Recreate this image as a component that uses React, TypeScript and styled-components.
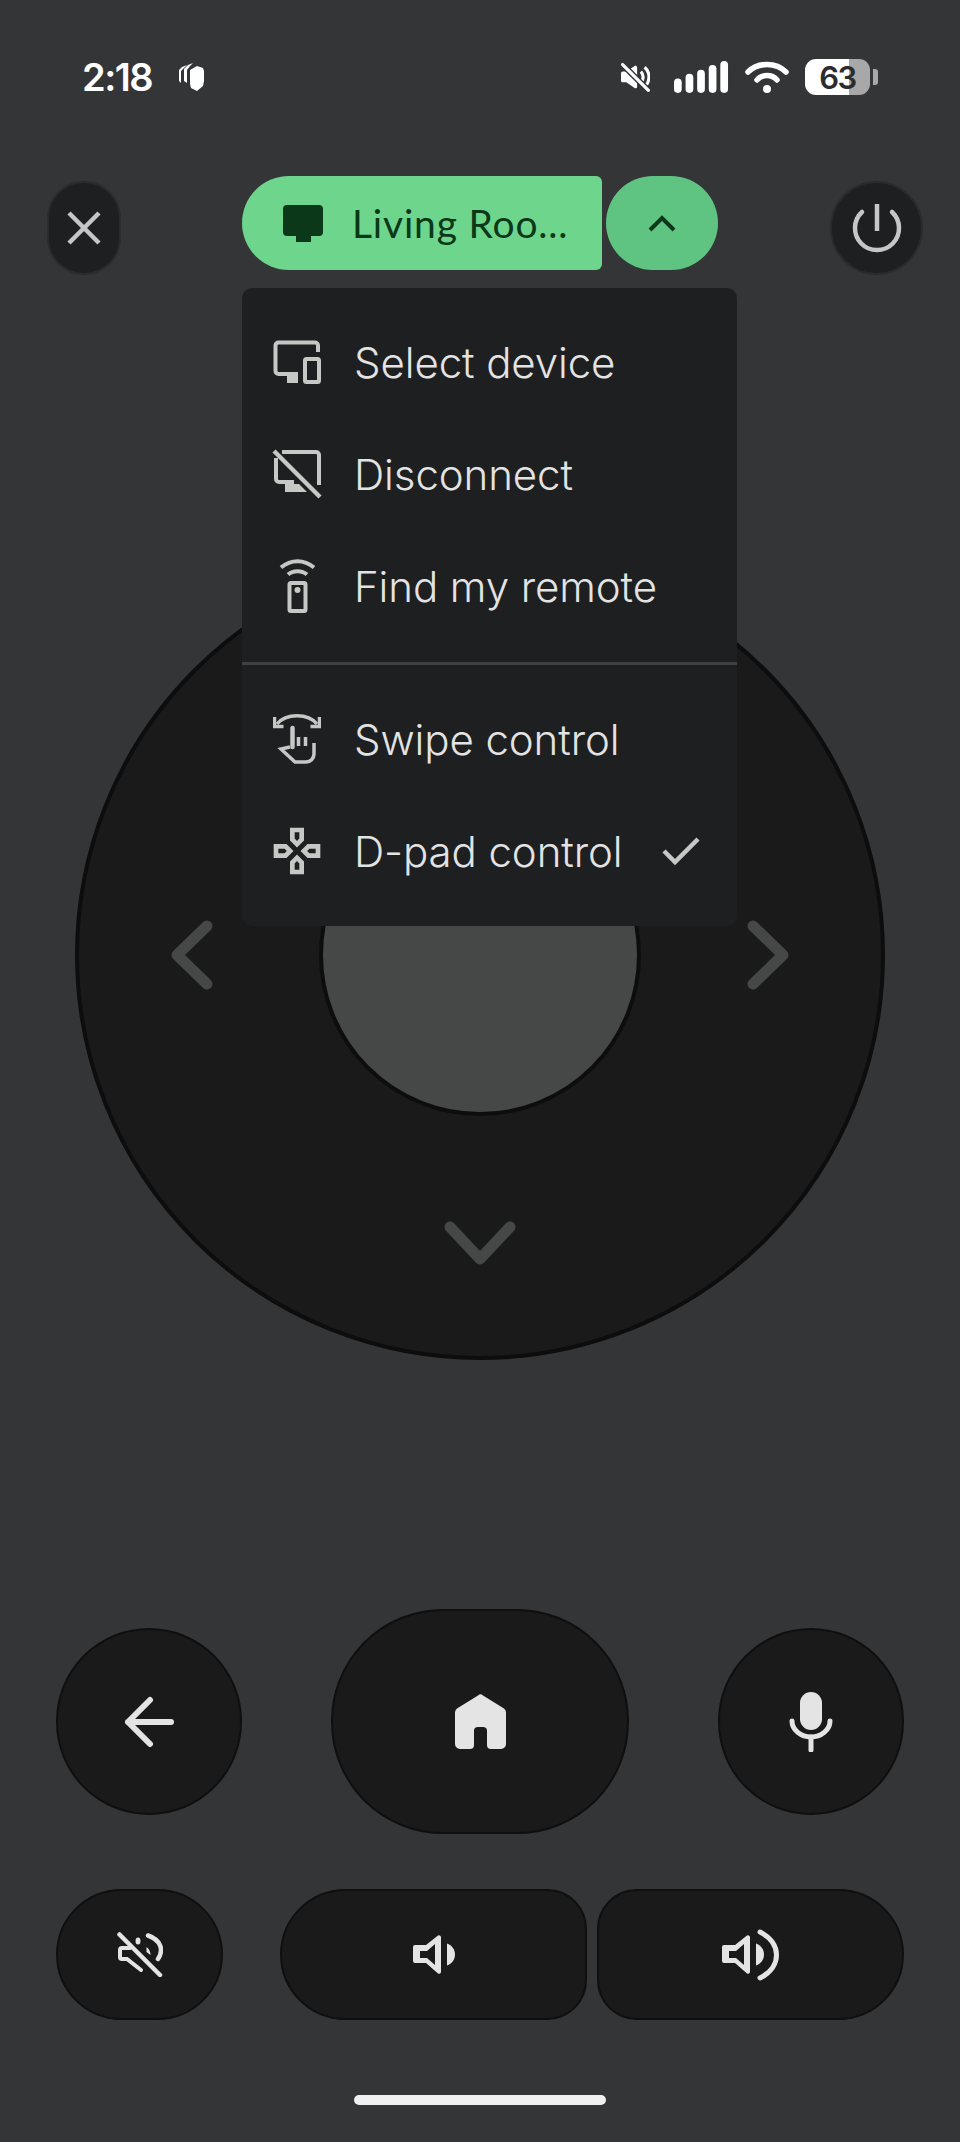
import styled, { createGlobalStyle } from "styled-components";

const GlobalStyle = createGlobalStyle`
  html, body {
    margin: 0;
    padding: 0;
    background: #343537;
  }
  * {
    box-sizing: border-box;
  }
  svg {
    display: block;
    flex: none;
  }
`;

const Screen = styled.main`
  width: 960px;
  height: 2142px;
  background: #343537;
  overflow: hidden;
  font-family: Inter, "Liberation Sans", sans-serif;
`;

const StatusBar = styled.header`
  height: 36px;
  margin-top: 59px;
  padding: 0 82px;
  display: flex;
  align-items: center;
  justify-content: space-between;
`;

const StatusLeft = styled.div`
  display: flex;
  align-items: center;
  gap: 25px;
`;

const Time = styled.span`
  width: 71px;
  font-family: Inter, sans-serif;
  font-size: 38px;
  font-weight: 600;
  letter-spacing: -1.5px;
  color: #fff;
`;

const StatusRight = styled.div`
  display: flex;
  align-items: center;
`;

const BatteryBody = styled.div`
  width: 65px;
  height: 36px;
  margin-left: 16px;
  border-radius: 11px;
  background: linear-gradient(90deg, #fff 68%, #a8a8a8 68%);
  color: #2b2c2e;
  font-family: Inter, sans-serif;
  font-size: 31px;
  font-weight: 600;
  letter-spacing: -1.5px;
  display: flex;
  align-items: center;
  justify-content: center;
`;

const BatteryNub = styled.div`
  width: 5px;
  height: 16px;
  margin-left: 3px;
  border-radius: 0 3px 3px 0;
  background: #a8a8a8;
`;

const TopRow = styled.nav`
  height: 94px;
  margin-top: 81px;
  padding: 0 37px 0 47px;
  display: flex;
  align-items: center;
`;

const RoundButton = styled.div<{ $w: number; $h: number }>`
  width: ${(p) => p.$w}px;
  height: ${(p) => p.$h}px;
  margin-top: 10px;
  border-radius: 47px;
  background: #1e1f21;
  border: 2px solid #2a2b2d;
  display: flex;
  align-items: center;
  justify-content: center;
`;

const PowerButton = styled(RoundButton)`
  margin-left: auto;
`;

const DeviceGroup = styled.div`
  position: relative;
  margin-left: 121px;
  display: flex;
  gap: 4px;
`;

const DevicePill = styled.div`
  width: 360px;
  height: 94px;
  padding-left: 41px;
  border-radius: 47px 6px 6px 47px;
  background: #6dd58c;
  color: #0a3818;
  display: flex;
  align-items: center;
  gap: 29px;
`;

const DeviceName = styled.span`
  font-family: Lato, sans-serif;
  font-size: 39px;
  letter-spacing: 0.8px;
`;

const ChevronPill = styled.div`
  width: 112px;
  height: 94px;
  border-radius: 47px;
  background: #5fc482;
  display: flex;
  align-items: center;
  justify-content: center;
`;

const Menu = styled.div`
  position: absolute;
  top: 112px;
  left: 0;
  z-index: 5;
  width: 495px;
  height: 638px;
  padding: 19px 0;
  border-radius: 10px;
  background: #1e1f21;
`;

const MenuItem = styled.div`
  height: 112px;
  padding-left: 29px;
  padding-bottom: 2px;
  display: flex;
  align-items: center;
  color: #e3e3e3;
  font-size: 42px;
  font-weight: 300;
  letter-spacing: -0.1px;
`;

const MenuIcon = styled.div`
  width: 52px;
  margin-right: 31px;
  display: flex;
  justify-content: center;
`;

const MenuCheck = styled.div`
  margin-left: auto;
  margin-right: 37px;
`;

const Divider = styled.div`
  height: 3px;
  margin: 19px 0;
  background: #3f4042;
`;

const DpadWrap = styled.section`
  margin-top: 280px;
  display: flex;
  justify-content: center;
`;

const Dpad = styled.div`
  width: 810px;
  height: 810px;
  border-radius: 50%;
  background: #1a1a1a;
  border: 4px solid #0d0d0d;
  display: grid;
  grid-template-columns: 1fr 322px 1fr;
  grid-template-rows: 1fr 322px 1fr;
  place-items: center;
`;

const DpadCenter = styled.div`
  grid-column: 2;
  grid-row: 2;
  width: 100%;
  height: 100%;
  border-radius: 50%;
  background: #464847;
  border: 4px solid #0d0d0d;
`;

const DpadArrow = styled.div<{ $col: number; $row: number; $shift?: string }>`
  grid-column: ${(p) => p.$col};
  grid-row: ${(p) => p.$row};
  transform: ${(p) => p.$shift ?? "none"};
`;

const ControlRow = styled.section`
  margin-top: 249px;
  padding: 0 56px;
  display: flex;
  align-items: center;
  justify-content: space-between;
`;

const Key = styled.div<{ $w: number; $h: number; $radius?: string }>`
  width: ${(p) => p.$w}px;
  height: ${(p) => p.$h}px;
  border-radius: ${(p) => p.$radius ?? "112px"};
  background: #1a1a1a;
  border: 2px solid #0f0f0f;
  display: flex;
  align-items: center;
  justify-content: center;
`;

const VolumeRow = styled.section`
  margin-top: 55px;
  padding: 0 56px;
  display: flex;
  align-items: center;
`;

const VolumeKeys = styled.div`
  margin-left: 57px;
  display: flex;
  gap: 10px;
`;

const HomeBar = styled.div`
  width: 252px;
  height: 10px;
  margin: 75px auto 0;
  border-radius: 5px;
  background: #f0f0f0;
`;

const MENU_ICON = "#c6c8c5";
const KEY_ICON = "#e4e4e4";
const ARROW = "#464847";

function SelectDeviceIcon() {
  return (
    <svg width="48" height="44" viewBox="0 0 48 44" fill="none" stroke={MENU_ICON} strokeWidth="4">
      <path d="M45 12V5.5a3 3 0 0 0-3-3H5.5a3 3 0 0 0-3 3V31a3 3 0 0 0 3 3H25" />
      <path d="M14 33h11v10H14z" fill={MENU_ICON} stroke="none" />
      <rect x="32" y="19" width="14" height="23" rx="1.5" />
    </svg>
  );
}

function DisconnectIcon() {
  return (
    <svg width="50" height="50" viewBox="0 0 50 50" fill="none" stroke={MENU_ICON} strokeWidth="4">
      <path d="M10 3h34a3 3 0 0 1 3 3v30" />
      <path d="M4 9v21a3 3 0 0 0 3 3h15" />
      <path d="M13 35h14l8 8H13z" fill={MENU_ICON} stroke="none" />
      <path d="M2 2l46 46" strokeWidth="4.5" />
    </svg>
  );
}

function RemoteIcon() {
  return (
    <svg width="37" height="54" viewBox="0 0 37 54" fill="none" stroke={MENU_ICON} strokeWidth="4">
      <path d="M2 8.5C12 0 25 0 35 8.5" />
      <path d="M9 15.5C14 11 23 11 28 15.5" />
      <rect x="10.5" y="24" width="16" height="28" rx="1.5" />
      <circle cx="18.5" cy="31" r="3" fill={MENU_ICON} stroke="none" />
    </svg>
  );
}

function SwipeIcon() {
  return (
    <svg width="48" height="50" viewBox="0 0 48 50" fill="none" stroke={MENU_ICON} strokeWidth="3.5">
      <path d="M1.5 3v9.5h9M46.5 3v9.5h-9" />
      <path d="M4 10C13 -1 35 -1 44 10" />
      <path d="M19.5 33V14" strokeWidth="4.5" strokeLinecap="round" />
      <path d="M25.5 23v9M32.5 23v9" />
      <path d="M41 29v11a8 8 0 0 1-8 8H22L8 35l9-2" />
    </svg>
  );
}

function GamepadIcon() {
  return (
    <svg width="56" height="56" viewBox="0 0 24 24" fill={MENU_ICON}>
      <path d="M13 4v2.67l-1 1-1-1V4h2m7 7v2h-2.67l-1-1 1-1H20M6.67 11l1 1-1 1H4v-2h2.67M12 16.33l1 1V20h-2v-2.67l1-1M15 2H9v5.5l3 3 3-3V2zm7 7h-5.5l-3 3 3 3H22V9zM7.5 9H2v6h5.5l3-3-3-3zm4.5 4.5l-3 3V22h6v-5.5l-3-3z" />
    </svg>
  );
}

const SPEAKER =
  "M2 11h11L25 1.5a2 2 0 0 1 3 1.5v35a2 2 0 0 1-3 1.5L13 29H2a2 2 0 0 1-2-2V13a2 2 0 0 1 2-2zM7 17v7h7l8 7V10l-8 7z";

function VolumeDownIcon() {
  return (
    <svg width="42" height="41" viewBox="0 0 42 41" fill={KEY_ICON}>
      <path d={SPEAKER} fillRule="evenodd" />
      <path d="M34 9.5c5 2 8 6 8 11s-3 9-8 11z" />
    </svg>
  );
}

function VolumeUpIcon() {
  return (
    <svg width="58" height="52" viewBox="0 0 58 52" fill={KEY_ICON}>
      <g transform="translate(0 5)">
        <path d={SPEAKER} fillRule="evenodd" />
        <path d="M34 9.5c5 2 8 6 8 11s-3 9-8 11z" />
      </g>
      <path d="M38 3C60 14 60 38 38 49" fill="none" stroke={KEY_ICON} strokeWidth="5" strokeLinecap="round" />
    </svg>
  );
}

function MuteIcon() {
  return (
    <svg width="46" height="45" viewBox="0 0 46 45" fill="none" stroke={KEY_ICON} strokeWidth="4" strokeLinecap="round">
      <path d="M13 16H5a2 2 0 0 0-2 2v7a2 2 0 0 0 2 2h5l14 11" />
      <ellipse cx="21" cy="9" rx="2.5" ry="3.5" fill={KEY_ICON} stroke="none" />
      <path d="M29.5 15c3 2 4 5 4 8l-4-3z" fill={KEY_ICON} stroke="none" />
      <path d="M31 3.5C44 8 47 18 41 27" strokeWidth="4.5" />
      <path d="M2.5 2.5L43 43" strokeWidth="4.5" />
    </svg>
  );
}

function Chevron({ d, w, h }: { d: string; w: number; h: number }) {
  return (
    <svg width={w} height={h} viewBox={`0 0 ${w} ${h}`} fill="none" stroke={ARROW} strokeWidth="11" strokeLinecap="round" strokeLinejoin="round">
      <path d={d} />
    </svg>
  );
}

const menuTop = [
  { label: "Select device", icon: <SelectDeviceIcon /> },
  { label: "Disconnect", icon: <DisconnectIcon /> },
  { label: "Find my remote", icon: <RemoteIcon /> },
];

export default function App() {
  return (
    <Screen>
      <GlobalStyle />
      <StatusBar>
        <StatusLeft>
          <Time>2:18</Time>
          <svg width="27" height="30" viewBox="0 0 27 30" fill="#fff">
            <path d="M9 3L4 5 1 8v11l2 2V9l3-3z" />
            <path d="M15 1L10 3 6 7v12l3 2V8l3-4z" />
            <path d="M19 4l6 2 1 3v10l-1 5-6 5-6-3-1-4V8z" />
          </svg>
        </StatusLeft>
        <StatusRight>
          <svg width="29" height="29" viewBox="0 0 54 54" fill="none" stroke="#fff" strokeWidth="6">
            <path d="M3 19h8l16-11v36L11 33H3z" fill="#fff" strokeLinejoin="round" />
            <path d="M37 16a14 14 0 0 1 0 20M44 8a24 24 0 0 1 0 36" />
            <path d="M3 3l48 48" stroke="#343537" strokeWidth="11" />
            <path d="M3 3l48 48" strokeLinecap="round" />
          </svg>
          <svg width="55" height="33" viewBox="0 0 57 34" fill="#fff" style={{ marginLeft: 24 }}>
            <rect x="0" y="18" width="8" height="15" rx="4" />
            <rect x="12" y="13" width="8" height="20" rx="4" />
            <rect x="24" y="9" width="8" height="24" rx="4" />
            <rect x="36" y="4" width="8" height="29" rx="4" />
            <rect x="48" y="0" width="8" height="33" rx="4" />
          </svg>
          <svg width="44" height="32" viewBox="0 0 44 32" fill="none" stroke="#fff" strokeWidth="5.5" strokeLinecap="round" style={{ marginLeft: 16 }}>
            <path d="M3 11C13 1 31 1 41 11" />
            <path d="M12 19C17 13 27 13 32 19" />
            <circle cx="22" cy="28" r="4" fill="#fff" stroke="none" />
          </svg>
          <BatteryBody>63</BatteryBody>
          <BatteryNub />
        </StatusRight>
      </StatusBar>

      <TopRow>
        <RoundButton $w={74} $h={94}>
          <svg width="34" height="34" viewBox="0 0 34 34" stroke="#c4c7c5" strokeWidth="4.5">
            <path d="M2 2l30 30M32 2L2 32" />
          </svg>
        </RoundButton>
        <DeviceGroup>
          <DevicePill>
            <svg width="40" height="37" viewBox="0 0 40 37" fill="#0a3818">
              <rect x="0" y="0" width="40" height="31" rx="4" />
              <rect x="13" y="28" width="15" height="9" />
            </svg>
            <DeviceName>Living Roo...</DeviceName>
          </DevicePill>
          <ChevronPill>
            <svg width="28" height="17" viewBox="0 0 28 17" fill="none" stroke="#0a3818" strokeWidth="4">
              <path d="M2 15L14 3l12 12" />
            </svg>
          </ChevronPill>
          <Menu>
            {menuTop.map((item) => (
              <MenuItem key={item.label}>
                <MenuIcon>{item.icon}</MenuIcon>
                {item.label}
              </MenuItem>
            ))}
            <Divider />
            <MenuItem>
              <MenuIcon>
                <SwipeIcon />
              </MenuIcon>
              Swipe control
            </MenuItem>
            <MenuItem>
              <MenuIcon>
                <GamepadIcon />
              </MenuIcon>
              D-pad control
              <MenuCheck>
                <svg width="38" height="30" viewBox="0 0 38 30" fill="none" stroke={MENU_ICON} strokeWidth="4.5">
                  <path d="M2 15l11 11L36 3" />
                </svg>
              </MenuCheck>
            </MenuItem>
          </Menu>
        </DeviceGroup>
        <PowerButton $w={93} $h={94}>
          <svg width="50" height="50" viewBox="0 0 50 50" fill="none" stroke="#c4c7c5" strokeWidth="4.5">
            <path d="M25 1v27" />
            <path d="M10 9a22 22 0 1 0 30 0" strokeLinecap="round" />
          </svg>
        </PowerButton>
      </TopRow>

      <DpadWrap>
        <Dpad>
          <DpadArrow $col={2} $row={1} $shift="translateY(20px)">
            <Chevron w={74} h={46} d="M6 40L37 7l31 33" />
          </DpadArrow>
          <DpadArrow $col={1} $row={2} $shift="translateX(-7px)">
            <Chevron w={44} h={70} d="M37 6L7 35l30 29" />
          </DpadArrow>
          <DpadCenter />
          <DpadArrow $col={3} $row={2} $shift="translateX(7px)">
            <Chevron w={44} h={70} d="M7 6l30 29L7 64" />
          </DpadArrow>
          <DpadArrow $col={2} $row={3} $shift="translateY(7px)">
            <Chevron w={72} h={44} d="M6 6l30 32L66 6" />
          </DpadArrow>
        </Dpad>
      </DpadWrap>

      <ControlRow>
        <Key $w={186} $h={187}>
          <svg width="52" height="52" viewBox="0 0 52 52" fill="none" stroke={KEY_ICON} strokeWidth="6" strokeLinecap="round" strokeLinejoin="round">
            <path d="M48 26H5M27 4L5 26l22 22" />
          </svg>
        </Key>
        <Key $w={298} $h={225}>
          <svg width="51" height="55" viewBox="0 0 51 55" fill={KEY_ICON}>
            <path d="M23 1.5a3.5 3.5 0 0 1 5 0L49 14.5a5 5 0 0 1 2 4V50a5 5 0 0 1-5 5H36a4 4 0 0 1-4-4V37a4 4 0 0 0-4-4h-5a4 4 0 0 0-4 4v14a4 4 0 0 1-4 4H5a5 5 0 0 1-5-5V18.5a5 5 0 0 1 2-4z" />
          </svg>
        </Key>
        <Key $w={186} $h={187}>
          <svg width="44" height="60" viewBox="0 0 44 60" fill="none" stroke={KEY_ICON} strokeWidth="5" strokeLinecap="round">
            <rect x="11" y="0" width="22" height="38" rx="11" fill={KEY_ICON} stroke="none" />
            <path d="M3 29C3 38 12 45 22 45s19-7 19-16" />
            <path d="M22 45v13" />
          </svg>
        </Key>
      </ControlRow>

      <VolumeRow>
        <Key $w={167} $h={131}>
          <MuteIcon />
        </Key>
        <VolumeKeys>
          <Key $w={307} $h={131} $radius="66px 40px 40px 66px">
            <VolumeDownIcon />
          </Key>
          <Key $w={307} $h={131} $radius="40px 66px 66px 40px">
            <VolumeUpIcon />
          </Key>
        </VolumeKeys>
      </VolumeRow>

      <HomeBar />
    </Screen>
  );
}
